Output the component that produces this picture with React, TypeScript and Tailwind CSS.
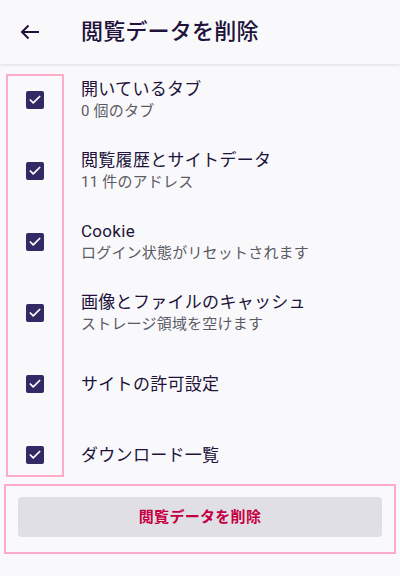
import { Check } from 'lucide-react'

const items = [
  { title: '開いているタブ', sub: '0 個のタブ' },
  { title: '閲覧履歴とサイトデータ', sub: '11 件のアドレス' },
  { title: 'Cookie', sub: 'ログイン状態がリセットされます' },
  { title: '画像とファイルのキャッシュ', sub: 'ストレージ領域を空けます' },
  { title: 'サイトの許可設定' },
  { title: 'ダウンロード一覧' },
]

const font = { fontFamily: 'Roboto, "Noto Sans CJK JP", sans-serif' }

export default function App() {
  return (
    <div className="relative w-[400px] h-[576px] bg-[#f9f9fb] text-[#20123a] overflow-hidden" style={font}>
      {/* Toolbar */}
      <header className="h-16 flex items-center bg-[#f9f9fb] shadow-[0_1px_3px_rgba(0,0,0,0.12)] relative z-10">
        <button className="ml-5 w-5 h-4 flex items-center justify-center">
          <svg width="20" height="16" viewBox="0 0 20 16" fill="none" stroke="#20123a" strokeWidth="2">
            <path d="M19 8H2.5" />
            <path d="M8.5 1.5L2 8l6.5 6.5" />
          </svg>
        </button>
        <h1 className="ml-[41px] text-[22px] font-medium leading-none tracking-[0.2px]">閲覧データを削除</h1>
      </header>

      {/* Options */}
      <div>
        {items.map(item => (
          <label key={item.title} className="h-[71px] flex items-center cursor-pointer">
            <span className="ml-[26px] w-[18px] h-[18px] rounded-[2px] bg-[#312a64] flex items-center justify-center">
              <Check size={14} strokeWidth={3} color="#ffffff" />
            </span>
            <span className="ml-[37px] flex flex-col">
              <span className="text-[17px] leading-[22px] tracking-[0.3px] text-[#20123a]">{item.title}</span>
              {item.sub && <span className="text-[15px] leading-[22px] tracking-[0.2px] text-[#5b5b66]">{item.sub}</span>}
            </span>
          </label>
        ))}
      </div>

      {/* Delete button */}
      <div className="px-[18px] pt-[7px]">
        <button className="w-full h-10 rounded-[4px] bg-[#e0dfe5] text-[#c50042] text-[15px] font-bold tracking-[0.3px]">
          閲覧データを削除
        </button>
      </div>

      {/* Highlight overlays */}
      <div className="absolute left-[6px] top-[74px] w-[58px] h-[403px] border-2 border-[#ffacc8] pointer-events-none" />
      <div className="absolute left-[4px] top-[484px] w-[392px] h-[70px] border-2 border-[#ffacc8] pointer-events-none" />
    </div>
  )
}
